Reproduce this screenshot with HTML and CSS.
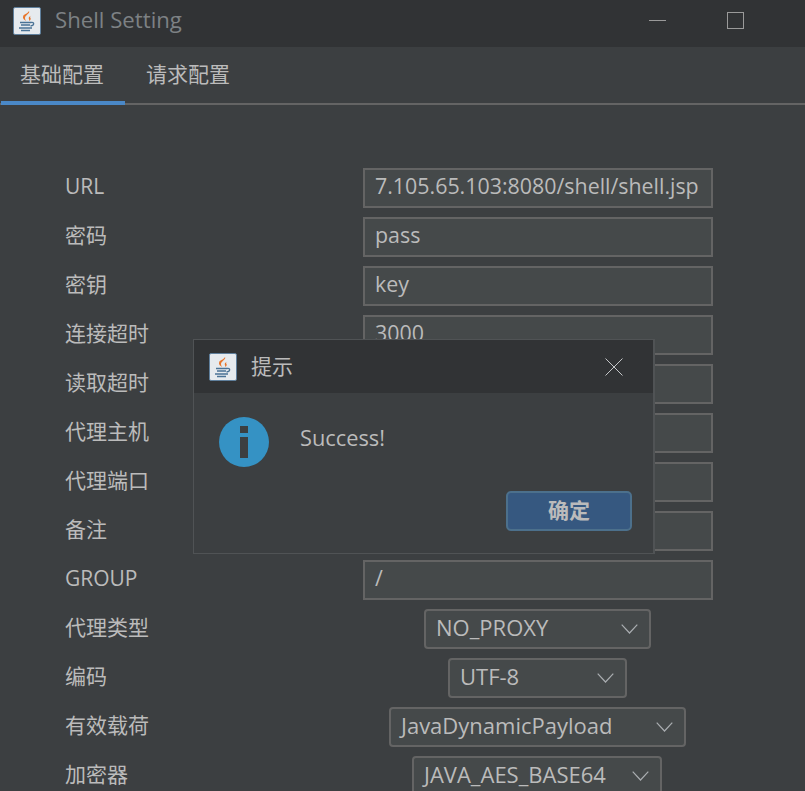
FILE: index.html
```html
<!DOCTYPE html>
<html lang="zh-CN">
<head>
<meta charset="utf-8">
<title>Shell Setting</title>
<link rel="stylesheet" href="styles.css">
</head>
<body>
<svg class="defs" width="0" height="0" aria-hidden="true">
  <symbol id="java" viewBox="0 0 28 28">
    <rect x="0.5" y="0.5" width="27" height="27" rx="1.500" fill="#e6eaee" stroke="#5f7f9c"/>
    <path d="M16 4c1.500 2.500-4 4-4 7 0 1.200.6 2.200 1.200 3-2.200-1-3.900-2.800-3-5 .8-2 4.800-2.500 5.800-5z" fill="#e8762d"/>
    <path d="M18.500 8.500c-2 .8-3.500 1.800-2.500 3.700.3.600.4 1.200.1 1.800 1.800-1.200 2-2.300 1.200-3.300-.5-.8 0-1.500 1.200-2.200z" fill="#e8762d"/>
    <path d="M7 15.500h11M8 18h9M6 21h13M8 23.500h9" stroke="#4b7396" stroke-width="1.500" fill="none"/>
    <path d="M18 15.500c3.500-.8 3.800 2.800-.5 3.500" stroke="#4b7396" stroke-width="1.300" fill="none"/>
  </symbol>
  <symbol id="chev" viewBox="0 0 17 10">
    <path d="M.7.7 8.500 9 16.300.7" fill="none" stroke="#a9adb0" stroke-width="1.200"/>
  </symbol>
</svg>
<div class="window">
  <header class="titlebar">
    <svg class="app-icon"><use href="#java"/></svg>
    <span class="title">Shell Setting</span>
    <span class="min"></span>
    <span class="max"></span>
  </header>
  <nav class="tabs">
    <div class="tab tab-active">基础配置</div>
    <div class="tab">请求配置</div>
  </nav>
  <main class="form">
    <div class="row"><label>URL</label><div class="field"><div class="input">7.105.65.103:8080/shell/shell.jsp</div></div></div>
    <div class="row"><label class="cjk">密码</label><div class="field"><div class="input">pass</div></div></div>
    <div class="row"><label class="cjk">密钥</label><div class="field"><div class="input">key</div></div></div>
    <div class="row"><label class="cjk">连接超时</label><div class="field"><div class="input">3000</div></div></div>
    <div class="row"><label class="cjk">读取超时</label><div class="field"><div class="input">60000</div></div></div>
    <div class="row"><label class="cjk">代理主机</label><div class="field"><div class="input">127.0.0.1</div></div></div>
    <div class="row"><label class="cjk">代理端口</label><div class="field"><div class="input">8888</div></div></div>
    <div class="row"><label class="cjk">备注</label><div class="field"><div class="input">备注</div></div></div>
    <div class="row"><label>GROUP</label><div class="field"><div class="input">/</div></div></div>
    <div class="row"><label class="cjk">代理类型</label><div class="field"><div class="combo combo-proxy"><span>NO_PROXY</span><svg class="chev"><use href="#chev"/></svg></div></div></div>
    <div class="row"><label class="cjk">编码</label><div class="field"><div class="combo combo-enc"><span>UTF-8</span><svg class="chev"><use href="#chev"/></svg></div></div></div>
    <div class="row"><label class="cjk">有效载荷</label><div class="field"><div class="combo combo-payload"><span>JavaDynamicPayload</span><svg class="chev"><use href="#chev"/></svg></div></div></div>
    <div class="row"><label class="cjk">加密器</label><div class="field"><div class="combo combo-crypt"><span>JAVA_AES_BASE64</span><svg class="chev"><use href="#chev"/></svg></div></div></div>
  </main>
</div>
<section class="dialog">
  <header class="dialog-bar">
    <svg class="dialog-icon"><use href="#java"/></svg>
    <span class="dialog-title">提示</span>
    <svg class="close" viewBox="0 0 18 18"><path d="M.5.500 17.500 17.500M17.500.500 .5 17.500" stroke="#c4c6c8" stroke-width="1" fill="none"/></svg>
  </header>
  <div class="dialog-body">
    <svg class="info" viewBox="0 0 50 50">
      <circle cx="25" cy="25" r="25" fill="#3592c4"/>
      <rect x="21" y="9" width="8" height="7" fill="#3c3f41"/>
      <rect x="21" y="20" width="8" height="21" fill="#3c3f41"/>
    </svg>
    <p class="message">Success!</p>
  </div>
  <div class="dialog-actions"><button class="ok">确定</button></div>
</section>
</body>
</html>
```
FILE: styles.css
```css
* { box-sizing: border-box; }
html, body { margin: 0; height: 100%; overflow: hidden; }
body {
  background: #3c3f41;
  color: #bbbbbb;
  font-family: "Open Sans", "Noto Sans CJK SC", sans-serif;
  font-size: 21px;
  position: relative;
}
.defs { position: absolute; }
.window { height: 791px; overflow: hidden; }
.titlebar {
  height: 47px;
  background: #313335;
  display: flex;
  align-items: center;
  padding-left: 13px;
}
.app-icon { width: 28px; height: 28px; margin-top: -5px; }
.title { margin: -8px 0 0 14px; font-size: 22.200px; color: #7d8184; }
.min { margin-left: auto; margin-top: -7px; width: 17px; height: 1px; background: #9a9a9a; }
.max { margin: -7px 61px 0 61px; width: 17px; height: 17px; border: 1px solid #9a9a9a; }
.tabs {
  height: 58px;
  display: flex;
  border-bottom: 2px solid #646464;
}
.tab {
  width: 124px;
  height: 58px;
  flex: none;
  padding: 12px 0 0 20px;
  line-height: 30px;
  font-size: 21px;
}
.tab + .tab { width: 140px; padding-left: 21px; }
.tab-active { margin-left: 1px; padding-left: 19px; border-bottom: 4px solid #4a88c7; }
.form {
  padding: 63px 92px 0 65px;
  display: flex;
  flex-direction: column;
  gap: 9px;
}
.row { display: flex; align-items: center; height: 40px; flex: none; }
.row label { width: 298px; flex: none; padding-bottom: 4px; font-size: 21px; }
.row label.cjk { padding-bottom: 6px; }
.field { width: 350px; display: flex; justify-content: center; }
.input {
  width: 350px;
  height: 40px;
  padding-left: 10px;
  line-height: 32px;
  background: #45494a;
  border: 2px solid #646464;
  white-space: nowrap;
  overflow: hidden;
  font-size: 21.400px;
}
.combo {
  height: 40px;
  margin-right: 1px;
  padding: 0 11px 4px 10px;
  display: flex;
  align-items: center;
  justify-content: space-between;
  background: #45494a;
  border: 2px solid #646464;
  border-radius: 4px;
  font-size: 22px;
  white-space: nowrap;
}
.combo-proxy { width: 227px; }
.combo-enc { width: 179px; }
.combo-payload { width: 297px; }
.combo-crypt { width: 250px; margin-right: 2px; }
.chev { width: 17px; height: 10px; flex: none; margin-top: 4px; }
.dialog {
  position: absolute;
  left: 193px;
  top: 339px;
  width: 462px;
  height: 215px;
  background: #3c3f41;
  border: 1px solid #505355;
  border-width: 1px 2px 1px 1px;
}
.dialog-bar {
  height: 53px;
  background: #313335;
  display: flex;
  align-items: center;
  padding-left: 15px;
}
.dialog-icon { width: 28px; height: 28px; }
.dialog-title { margin: -3px 0 0 14px; font-size: 21px; color: #bbbbbb; }
.close { width: 18px; height: 18px; margin-left: auto; margin-right: 30px; }
.dialog-body { display: flex; align-items: flex-start; height: 98px; padding: 24px 0 0 25px; }
.info { width: 50px; height: 50px; flex: none; }
.message { margin: 6px 0 0 31px; font-size: 21.800px; line-height: 30px; }
.dialog-actions { display: flex; justify-content: flex-end; padding-right: 21px; }
.ok {
  width: 126px;
  height: 40px;
  padding: 0 0 4px;
  background: #365880;
  border: 2px solid #4c708c;
  border-radius: 5px;
  color: #bbbbbb;
  font: bold 21px "Open Sans", "Noto Sans CJK SC", sans-serif;
}
```
